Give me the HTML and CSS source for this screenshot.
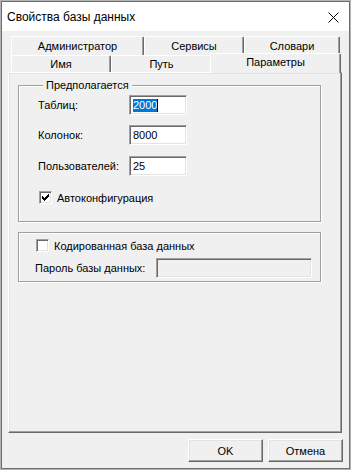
FILE: index.html
```html
<!DOCTYPE html>
<html lang="ru">
<head>
<meta charset="utf-8">
<title>Свойства базы данных</title>
<link rel="stylesheet" href="styles.css">
</head>
<body>
<div class="window">
  <div class="frame">
    <div class="titlebar">
      <span class="title">Свойства базы данных</span>
      <svg class="close" width="11" height="11" viewBox="0 0 11 11">
        <path d="M0.5 0.5 L10.5 10.5 M10.5 0.5 L0.5 10.5" stroke="#000" stroke-width="1" fill="none"/>
      </svg>
    </div>
    <div class="client">
      <div class="tabs">
        <div class="tabrow row1">
          <div class="tab t-admin">Администратор</div>
          <div class="tab t-serv">Сервисы</div>
          <div class="tab t-dict">Словари</div>
        </div>
        <div class="tabrow row2">
          <div class="tab t-name">Имя</div>
          <div class="tab t-path">Путь</div>
          <div class="tab t-params selected">Параметры</div>
        </div>
      </div>
      <div class="panel">
        <fieldset class="group g1">
          <legend>Предполагается</legend>
          <div class="row r1">
            <span class="label">Таблиц:</span>
            <span class="field"><span class="sel">2000</span><span class="caret"></span></span>
          </div>
          <div class="row r2">
            <span class="label">Колонок:</span>
            <span class="field">8000</span>
          </div>
          <div class="row r3">
            <span class="label">Пользователей:</span>
            <span class="field">25</span>
          </div>
          <div class="check-row">
            <span class="checkbox">
              <svg width="7" height="7" viewBox="0 0 7 7"><path d="M0 2h1v1h1v1h1v-1h1v-1h1v-1h1v-1h1v3h-1v1h-1v1h-1v1h-1v1h-1v-1h-1v-1h-1z" fill="#000"/></svg>
            </span>
            <span class="check-text">Автоконфигурация</span>
          </div>
        </fieldset>
        <fieldset class="group g2">
          <div class="check-row cr2">
            <span class="checkbox"></span>
            <span class="check-text">Кодированная база данных</span>
          </div>
          <div class="row pw">
            <span class="label">Пароль базы данных:</span>
            <span class="field disabled"></span>
          </div>
        </fieldset>
      </div>
      <div class="buttons">
        <button class="btn">OK</button>
        <button class="btn">Отмена</button>
      </div>
    </div>
  </div>
</div>
</body>
</html>
```

FILE: styles.css
```css
* { box-sizing: border-box; }
html, body { margin: 0; padding: 0; }
body {
  width: 351px;
  height: 470px;
  background: #f0f0f0;
  font-family: "Liberation Sans", Arial, sans-serif;
  font-size: 11px;
  color: #000;
}
.window {
  width: 351px;
  height: 470px;
  border: 1px solid #b4b4b4;
}
.frame {
  height: 100%;
  border: 1px solid #6e6e6e;
  display: flex;
  flex-direction: column;
}
.titlebar {
  height: 29px;
  background: #fff;
  display: flex;
  align-items: center;
  justify-content: space-between;
  padding: 0 10px 0 5px;
}
.title {
  font-size: 12px;
  padding-top: 1px;
}
.close { display: block; margin-top: 1px; }
.client {
  flex: 1;
  background: #f0f0f0;
  padding: 5px 6px 0 6px;
  display: flex;
  flex-direction: column;
}
.tabs { padding-left: 3px; }
.tabrow { display: flex; }
.row1 { height: 19px; }
.row2 { height: 17px; }
.tab {
  height: 100%;
  border-top: 1px solid #fff;
  border-left: 1px solid #fff;
  border-right: 1px solid #696969;
  box-shadow: inset -1px 0 #a0a0a0;
  border-top-left-radius: 2px;
  border-top-right-radius: 2px;
  display: flex;
  align-items: center;
  justify-content: center;
  background: #f0f0f0;
  padding-bottom: 1px;
}
.t-admin { width: 133px; }
.t-serv { width: 100px; }
.t-dict { width: 96px; }
.t-name { width: 100px; }
.t-path { width: 101px; }
.t-params { width: 128px; }
.tab.selected {
  width: 131px;
  margin-left: -2px;
  margin-top: -2px;
  height: 20px;
  z-index: 2;
  padding-bottom: 4px;
}
.panel {
  height: 361px;
  border: 1px solid;
  border-color: #fff #696969 #696969 #fff;
  box-shadow: inset -1px -1px #a0a0a0, inset 1px 1px #e3e3e3;
  padding: 6px 0 0 9px;
  width: 334px;
}
.group {
  margin: 0;
  width: 303px;
  border: 1px solid #a0a0a0;
  box-shadow: inset 1px 1px #fff, 1px 1px #fff;
  padding: 0;
  min-width: 0;
}
.group legend {
  margin-left: 5px;
  padding: 0 3px;
  line-height: 13px;
  background: #f0f0f0;
}
.g1 { padding: 3px 0 16px 19px; }
.g2 { margin-top: 10px; padding: 5px 0 3px 16px; }
.row {
  display: flex;
  align-items: center;
  height: 20px;
}
.r1 { margin-bottom: 10px; }
.r2 { margin-bottom: 11px; }
.r3 { margin-bottom: 14px; }
.label { width: 91px; }
.field {
  width: 58px;
  height: 20px;
  background: #fff;
  border: 1px solid;
  border-color: #a0a0a0 #fff #fff #a0a0a0;
  box-shadow: inset 1px 1px #696969, inset -1px -1px #e3e3e3;
  padding: 0 0 0 3px;
  display: flex;
  align-items: center;
}
.sel {
  background: #0078d7;
  color: #fff;
  line-height: 13px;
}
.caret {
  width: 1px;
  height: 13px;
  background: #000;
}
.check-row {
  display: flex;
  align-items: center;
  height: 15px;
}
.checkbox {
  width: 13px;
  height: 13px;
  background: #fff;
  border: 1px solid;
  border-color: #a0a0a0 #fff #fff #a0a0a0;
  box-shadow: inset 1px 1px #696969, inset -1px -1px #e3e3e3;
  display: flex;
  align-items: center;
  justify-content: center;
  margin-left: 1px;
}
.check-text { margin-left: 5px; }
.cr2 { margin-bottom: 5px; }
.cr2 .checkbox { margin-left: 1px; }
.pw .label { width: 121px; }
.field.disabled {
  width: 156px;
  background: #f0f0f0;
}
.buttons {
  display: flex;
  justify-content: flex-end;
  gap: 5px;
  margin-top: 6px;
  padding-right: 0px;
}
.btn {
  width: 75px;
  height: 23px;
  font-family: "Liberation Sans", Arial, sans-serif;
  font-size: 11px;
  color: #000;
  background: #f0f0f0;
  border: 1px solid;
  border-color: #fff #696969 #696969 #fff;
  box-shadow: inset -1px -1px #a0a0a0, inset 1px 1px #e3e3e3;
  padding: 0;
}
```
